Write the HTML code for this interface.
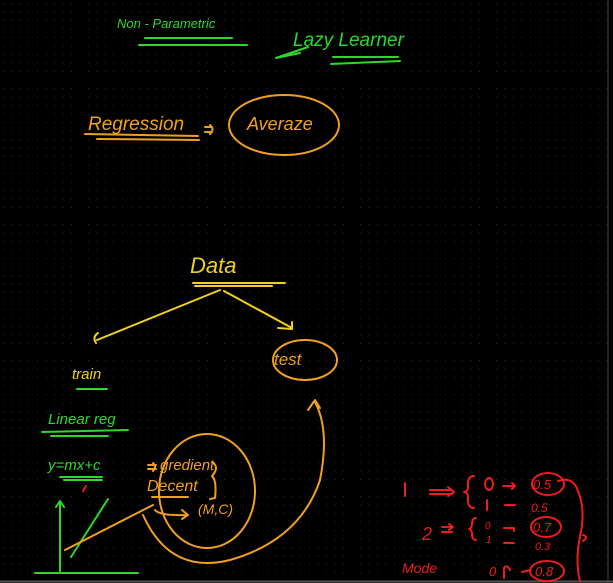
<!DOCTYPE html>
<html><head><style>
html,body{margin:0;padding:0;background:#000;width:613px;height:583px;overflow:hidden}
svg{display:block}
text{font-family:"Liberation Sans",sans-serif}
</style></head><body>
<svg width="613" height="583" viewBox="0 0 613 583" xmlns="http://www.w3.org/2000/svg">
<defs>
<pattern id="d" width="8.5" height="8.5" patternUnits="userSpaceOnUse"><rect x="3" y="3" width="1" height="1" fill="#2a2a2a"/></pattern>
</defs>
<rect width="613" height="583" fill="#000"/>
<rect width="613" height="583" fill="url(#d)"/>
<line x1="608" y1="0" x2="608" y2="581" stroke="#444" stroke-width="1"/>
<line x1="0" y1="581.5" x2="613" y2="581.5" stroke="#555" stroke-width="2"/>

<g fill="none" stroke-linecap="round" stroke-linejoin="round">
<g stroke="#2ed82a" stroke-width="2">
<line x1="145" y1="38" x2="232" y2="38"/><line x1="139" y1="45" x2="247" y2="45"/>
<line x1="333" y1="57" x2="398" y2="57"/><line x1="331" y1="64" x2="400" y2="61"/>
<path d="M308 47 L276 58 L300 53"/>
<line x1="42" y1="432" x2="128" y2="430"/><line x1="51" y1="436" x2="108" y2="436"/>
<line x1="60" y1="477" x2="102" y2="477"/><line x1="64" y1="480" x2="102" y2="480"/>
<path d="M60 571 V502 M56 507 L60 501 L64 507"/>
<line x1="35" y1="573" x2="138" y2="573"/>
<line x1="71" y1="557" x2="108" y2="499"/>
<line x1="77" y1="389" x2="107" y2="389"/>
</g>
<g stroke="#f0a020" stroke-width="2">
<line x1="85" y1="134" x2="198" y2="136"/><line x1="97" y1="139" x2="199" y2="140"/>
<path d="M205 127 h7 M205 132 h7 M210 125 q5 4 0 9"/>
<ellipse cx="284" cy="125" rx="55" ry="30"/>
<ellipse cx="305" cy="360" rx="32" ry="20"/>
<ellipse cx="207" cy="491" rx="48" ry="57"/>
<path d="M148 465 h8 M148 469 h8 M153 463 q4 4 0 8"/>
<path d="M212 462 q8 5 0 14 q5 5 3 22 l-5 1"/>
<line x1="152" y1="497" x2="188" y2="497"/>
<line x1="65" y1="550" x2="153" y2="505"/>
<path d="M155 510 q5 6 32 5 M182 510 l6 5 l-6 4"/>
<path d="M143 515 Q170 575 230 560 Q300 540 320 480 Q330 430 315 402 M308 410 L315 400 L320 408"/>
</g>
<g stroke="#f0d020" stroke-width="2">
<line x1="193" y1="283" x2="285" y2="283"/><line x1="195" y1="286" x2="272" y2="286"/>
<line x1="220" y1="290" x2="97" y2="340"/><path d="M98 333 q-6 4 -2 10"/>
<line x1="224" y1="291" x2="292" y2="328"/><path d="M278 328 L292 329 L292 322"/>
</g>
<g stroke="#ee1c1c" stroke-width="2">
<line x1="86" y1="486" x2="83" y2="491"/>
<line x1="405" y1="483" x2="405" y2="496"/>
<path d="M430 490 h22 M430 494 h22 M448 487 l6 5 l-6 4"/>
<path d="M474 476 q-6 0 -6 8 v4 q0 3 -4 4 q4 1 4 4 v4 q0 8 6 8"/>
<ellipse cx="489" cy="484" rx="4" ry="6"/>
<path d="M503 486 h12 M512 483 l3 3 l-3 3"/>
<ellipse cx="548" cy="484" rx="16" ry="11"/>
<line x1="487" y1="500" x2="487" y2="510"/><line x1="505" y1="505" x2="515" y2="505"/>
<path d="M558 481 q15 -5 20 10 q8 20 2 45 q-5 25 0 45 M583 535 q6 2 0 6"/>
<path d="M442 527 h10 M442 532 h10 M449 524 l4 3 l-4 3"/>
<path d="M476 518 q-4 0 -4 6 q0 4 -3 5 q3 1 3 5 q0 6 4 6"/>
<path d="M504 528 h10 M514 528 v3 M504 543 h10"/>
<ellipse cx="546" cy="527" rx="15" ry="10"/>
<ellipse cx="547" cy="571" rx="17" ry="10"/>
<path d="M510 570 q-3 -6 -6 -2 v10"/>
<line x1="522" y1="572" x2="530" y2="570"/>
</g>
</g>

<g font-style="italic">
<text x="117" y="28" font-size="13" fill="#2ed82a">Non - Parametric</text>
<text x="293" y="46" font-size="19" fill="#2ed82a">Lazy Learner</text>
<text x="88" y="130" font-size="19" fill="#f0a020">Regression</text>
<text x="247" y="130" font-size="18" fill="#f0a020">Averaze</text>
<text x="190" y="273" font-size="22" fill="#f0d020">Data</text>
<text x="72" y="379" font-size="15" fill="#f0d020">train</text>
<text x="274" y="365" font-size="17" fill="#f0a020">test</text>
<text x="48" y="424" font-size="15" fill="#2ed82a">Linear reg</text>
<text x="48" y="470" font-size="15" fill="#2ed82a">y=mx+c</text>
<text x="160" y="470" font-size="15" fill="#f0a020">gredient</text>
<text x="147" y="491" font-size="16" fill="#f0a020">Decent</text>
<text x="198" y="514" font-size="14" fill="#f0a020">(M,C)</text>
<text x="533" y="489" font-size="13" fill="#ee1c1c">0.5</text>
<text x="531" y="512" font-size="12" fill="#ee1c1c">0.5</text>
<text x="422" y="540" font-size="18" fill="#ee1c1c">2</text>
<text x="485" y="529" font-size="10" fill="#ee1c1c">0</text>
<text x="486" y="543" font-size="10" fill="#ee1c1c">1</text>
<text x="533" y="532" font-size="13" fill="#ee1c1c">0.7</text>
<text x="535" y="550" font-size="11" fill="#ee1c1c">0.3</text>
<text x="402" y="573" font-size="14" fill="#ee1c1c">Mode</text>
<text x="489" y="576" font-size="13" fill="#ee1c1c">0</text>
<text x="535" y="576" font-size="13" fill="#ee1c1c">0.8</text>
</g>
</svg>
</body></html>
